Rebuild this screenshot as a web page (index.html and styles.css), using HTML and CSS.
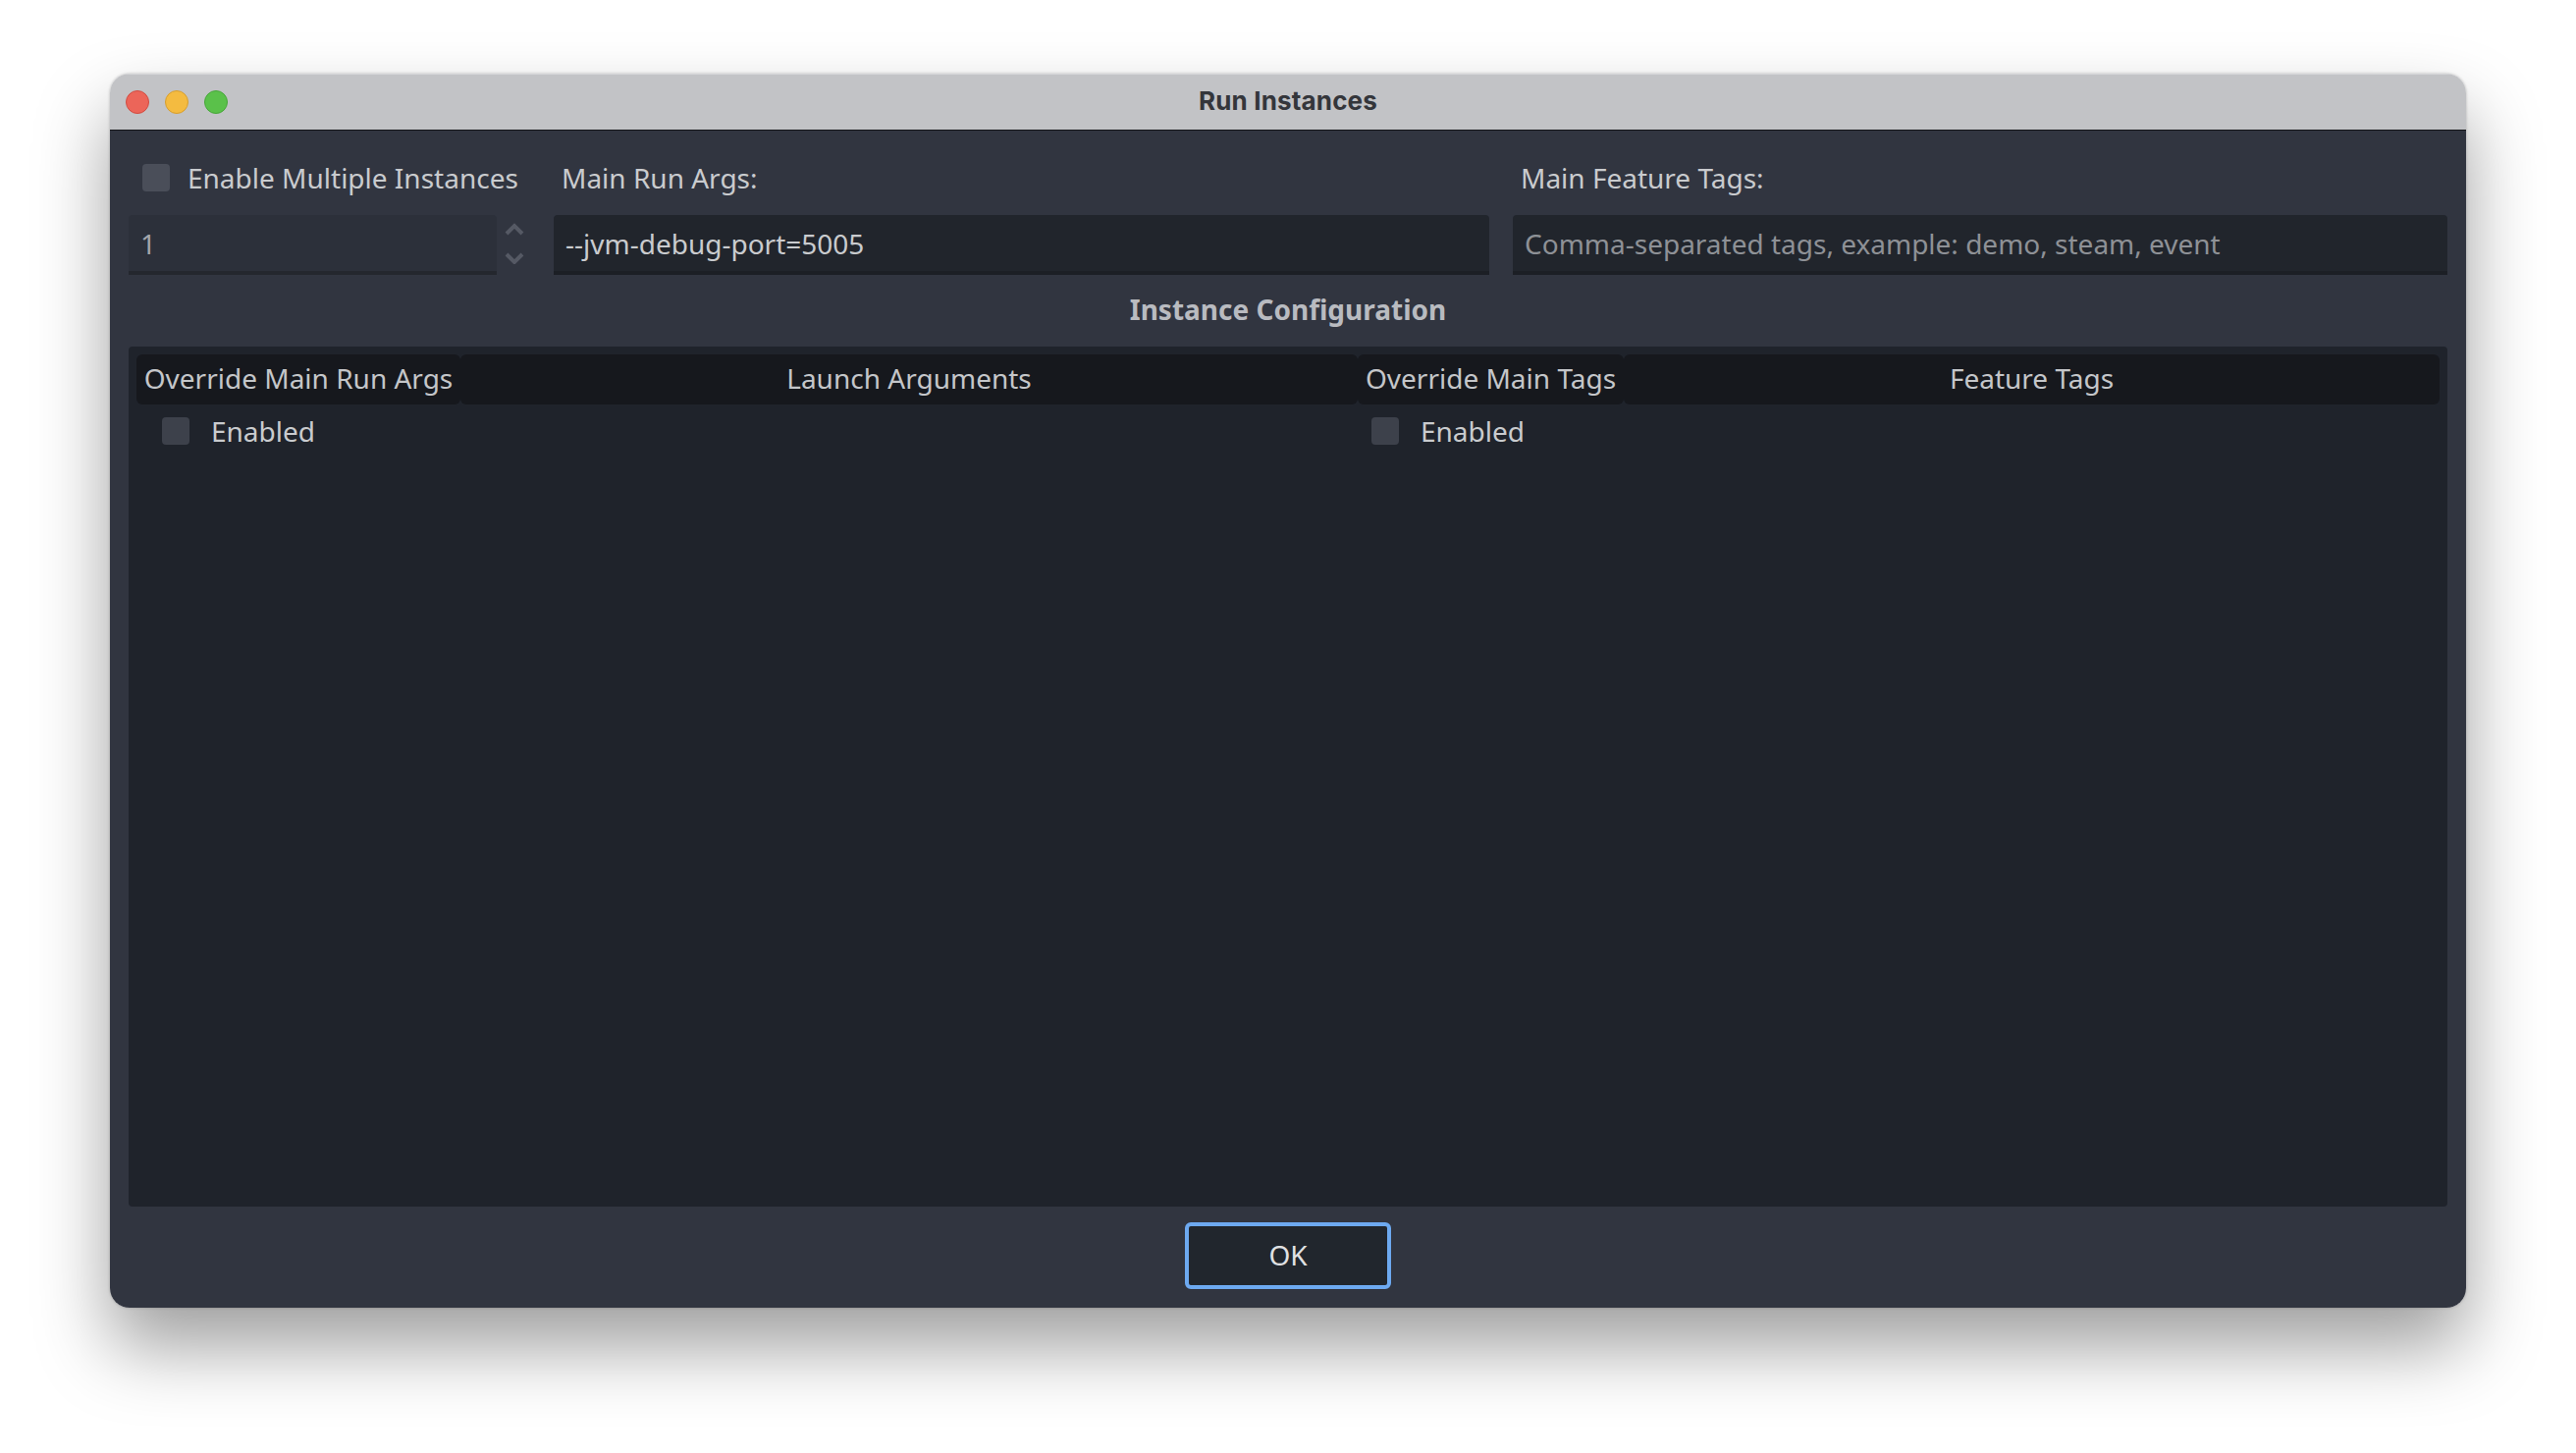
FILE: index.html
```html
<!DOCTYPE html>
<html lang="en">
<head>
    <meta charset="UTF-8">
    <title>Run Instances</title>
    <link rel="stylesheet" href="styles.css">
</head>
<body>
    <div class="window">
        <div class="titlebar">
            <div class="traffic">
                <span class="dot dot-close"></span>
                <span class="dot dot-min"></span>
                <span class="dot dot-max"></span>
            </div>
            <div class="title">Run Instances</div>
        </div>
        <div class="content">
            <div class="top-row">
                <div class="col col-count">
                    <label class="check-label top-check"><span class="box"></span>Enable Multiple Instances</label>
                    <div class="spin">
                        <div class="field field-disabled">1</div>
                        <svg class="spin-arrows" width="20" height="42" viewBox="0 0 20 42" fill="none">
                            <path d="M2 11 L10 3 L18 11" />
                            <path d="M2 32 L10 40 L18 32" />
                        </svg>
                    </div>
                </div>
                <div class="col col-args">
                    <div class="field-label">Main Run Args:</div>
                    <div class="field">--jvm-debug-port=5005</div>
                </div>
                <div class="col col-tags">
                    <div class="field-label">Main Feature Tags:</div>
                    <div class="field field-placeholder">Comma-separated tags, example: demo, steam, event</div>
                </div>
            </div>
            <div class="section-title">Instance Configuration</div>
            <div class="panel">
                <div class="table-grid">
                    <div class="th">Override Main Run Args</div>
                    <div class="th">Launch Arguments</div>
                    <div class="th">Override Main Tags</div>
                    <div class="th">Feature Tags</div>
                    <label class="check-label cell-check"><span class="box box-dark"></span>Enabled</label>
                    <div></div>
                    <label class="check-label cell-check cell-check-tags"><span class="box box-dark"></span>Enabled</label>
                    <div></div>
                </div>
            </div>
            <div class="footer">
                <button class="ok-button" type="button">OK</button>
            </div>
        </div>
    </div>
</body>
</html>
```

FILE: styles.css
```css
body {
    margin: 0;
    padding: 75px 112px 0;
    height: 1480px;
    box-sizing: border-box;
    overflow: hidden;
    background-color: #fff;
    font-family: "Noto Sans", "Open Sans", sans-serif;
    font-size: 28px;
    color: #c9cbce;
}
.window {
    width: 2400px;
    height: 1257px;
    border-radius: 20px;
    overflow: hidden;
    display: flex;
    flex-direction: column;
    box-shadow: 0 40px 75px rgba(0, 0, 0, 0.38), 0 0 3px rgba(0, 0, 0, 0.25);
}
/* Title bar */
.titlebar {
    flex: none;
    height: 55px;
    padding-bottom: 2px;
    position: relative;
    display: flex;
    align-items: center;
    justify-content: center;
    background-color: #c2c3c6;
    border-bottom: 1px solid #14161a;
    box-shadow: inset 0 1px 0 #d6d7d9;
}
.traffic {
    position: absolute;
    left: 16px;
    top: 17px;
    display: flex;
    gap: 16px;
}
.dot {
    width: 24px;
    height: 24px;
    box-sizing: border-box;
    border-radius: 50%;
    border: 1px solid;
}
.dot-close {
    background-color: #ec6559;
    border-color: #d14c41;
}
.dot-min {
    background-color: #f4bb40;
    border-color: #d69e2e;
}
.dot-max {
    background-color: #5ac14a;
    border-color: #47a63a;
}
.title {
    font-family: "Inter", "Liberation Sans", sans-serif;
    font-weight: 700;
    font-size: 26px;
    letter-spacing: 0.15px;
    color: #34363b;
}
/* Main area */
.content {
    flex: 1;
    display: flex;
    flex-direction: column;
    padding: 0 19px;
    background-color: #313540;
}
.top-row {
    display: flex;
}
.col {
    display: flex;
    flex-direction: column;
}
.col-count {
    width: 433px;
}
.col-args {
    width: 953px;
    margin-right: 24px;
}
.col-tags {
    width: 952px;
}
.field-label {
    height: 86px;
    line-height: 96px;
    padding-left: 8px;
    box-sizing: border-box;
}
.check-label {
    display: flex;
    align-items: center;
}
.top-check {
    height: 86px;
    padding: 10px 0 0 14px;
    box-sizing: border-box;
    white-space: nowrap;
}
.box {
    flex: none;
    width: 28px;
    height: 28px;
    margin-right: 18px;
    border-radius: 4px;
    background-color: #4a4e59;
}
.box-dark {
    background-color: #3d414b;
    margin-right: 22px;
}
.spin {
    display: flex;
    align-items: center;
}
.spin-arrows {
    margin: -3px 0 0 8px;
}
.spin-arrows path {
    stroke: #555964;
    stroke-width: 4;
}
.field {
    height: 61px;
    line-height: 58px;
    padding: 0 12px;
    box-sizing: border-box;
    background-color: #21252c;
    border-bottom: 4px solid #1c1f25;
    border-radius: 4px 4px 0 0;
}
.spin .field {
    width: 375px;
}
.field-disabled {
    background-color: #2c303a;
    border-bottom-color: #24272e;
    color: #a4a6ab;
}
.field-placeholder {
    color: #8e9196;
}
.section-title {
    height: 73px;
    line-height: 71px;
    text-align: center;
    font-weight: 700;
    color: #b9bbc0;
}
/* Instance table */
.panel {
    flex: 1;
    padding: 8px;
    background-color: #1f232b;
    border-radius: 4px;
}
.table-grid {
    display: grid;
    grid-template-columns: 330px 914px 271px 831px;
    grid-auto-rows: min-content;
}
.th {
    height: 51px;
    line-height: 49px;
    text-align: center;
    background-color: #16181d;
    border-radius: 6px;
    color: #c4c6c9;
}
.cell-check {
    height: 54px;
    padding: 0 0 0 26px;
    box-sizing: border-box;
}
.cell-check-tags {
    padding-left: 14px;
}
.footer {
    flex: none;
    height: 103px;
    display: flex;
    align-items: center;
    justify-content: center;
}
.ok-button {
    width: 210px;
    height: 68px;
    margin-bottom: 3px;
    padding: 0 0 3px;
    background-color: #21262d;
    border: 4px solid #6da9f0;
    border-radius: 6px;
    font-family: inherit;
    font-size: 28px;
    color: #e0e1e3;
}
```
